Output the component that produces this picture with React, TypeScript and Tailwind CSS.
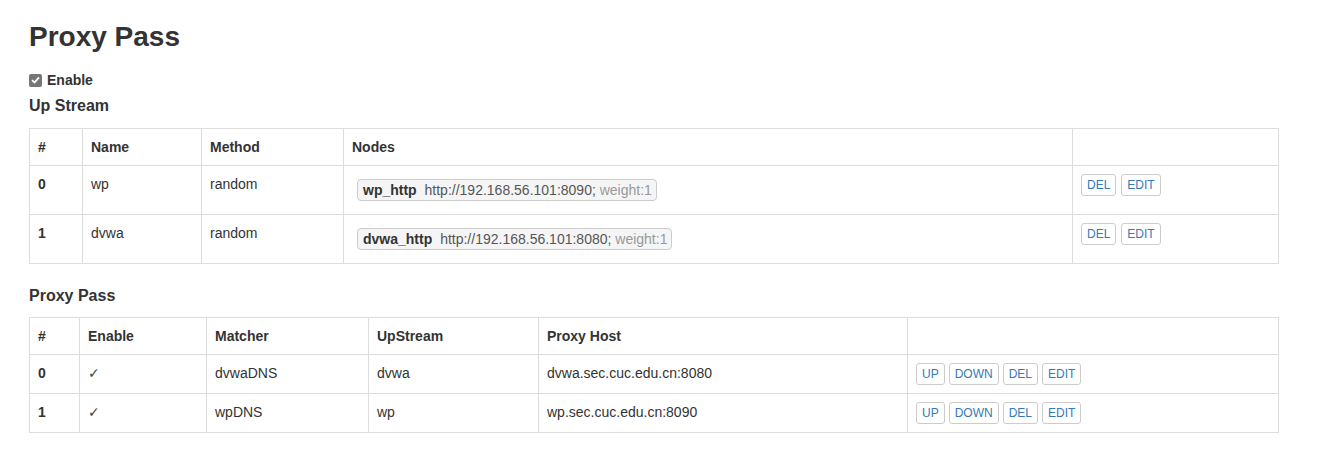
import React from "react";

type Upstream = { name: string; method: string; node: string; url: string };
type Rule = { matcher: string; upstream: string; host: string };

const upstreams: Upstream[] = [
  { name: "wp", method: "random", node: "wp_http", url: "http://192.168.56.101:8090;" },
  { name: "dvwa", method: "random", node: "dvwa_http", url: "http://192.168.56.101:8080;" },
];

const rules: Rule[] = [
  { matcher: "dvwaDNS", upstream: "dvwa", host: "dvwa.sec.cuc.edu.cn:8080" },
  { matcher: "wpDNS", upstream: "wp", host: "wp.sec.cuc.edu.cn:8090" },
];

const Btn = ({ label }: { label: string }) => (
  <button className="inline-block rounded-[3px] border border-[#ccc] bg-white px-[5px] py-[1px] text-[12px] leading-[18px] text-[#337ab7]">
    {label}
  </button>
);

const th = "border border-[#ddd] p-[8px] text-left align-top font-bold leading-[20px]";
const td = "border border-[#ddd] p-[8px] text-left align-top leading-[20px]";

const App = () => {
  return (
    <div
      className="min-h-[457px] bg-white px-[29px] text-[14px] text-[#333]"
      style={{ fontFamily: '"Liberation Sans", Arial, sans-serif' }}
    >
      <h1 className="pt-[21px] text-[28px] font-bold leading-[31px]">Proxy Pass</h1>

      <label className="mt-[18px] flex items-center text-[14px] font-bold leading-[20px]">
        <span className="mr-[5px] flex h-[13px] w-[13px] items-center justify-center rounded-[2px] bg-[#767676]">
          <svg width="9" height="8" viewBox="0 0 9 8">
            <path d="M1 4.2 L3.5 6.5 L8 1.3" fill="none" stroke="white" strokeWidth="1.8" />
          </svg>
        </span>
        Enable
      </label>

      <h3 className="mt-[6px] text-[16px] font-bold leading-[20px]">Up Stream</h3>

      <table className="mt-[12px] w-[1249px] table-fixed border-collapse">
        <colgroup>
          <col className="w-[53px]" />
          <col className="w-[119px]" />
          <col className="w-[142px]" />
          <col className="w-[729px]" />
          <col className="w-[206px]" />
        </colgroup>
        <thead>
          <tr>
            <th className={th}>#</th>
            <th className={th}>Name</th>
            <th className={th}>Method</th>
            <th className={th}>Nodes</th>
            <th className={th}></th>
          </tr>
        </thead>
        <tbody>
          {upstreams.map((u, i) => (
            <tr key={u.name}>
              <th className={th}>{i}</th>
              <td className={td}>{u.name}</td>
              <td className={td}>{u.method}</td>
              <td className={td}>
                <span className="m-[5px] inline-block rounded-[4px] border border-[#ccc] bg-[#f5f5f5] pl-[5px] pr-[4px] leading-[20px]">
                  <b className="mr-[4px] text-[#333]">{u.node}</b>{" "}
                  <span className="text-[#555]">{u.url}</span>{" "}
                  <span className="text-[#999]">weight:1</span>
                </span>
              </td>
              <td className={td}>
                <div className="flex gap-[5px]">
                  <Btn label="DEL" />
                  <Btn label="EDIT" />
                </div>
              </td>
            </tr>
          ))}
        </tbody>
      </table>

      <h3 className="mt-[22px] text-[16px] font-bold leading-[20px]">Proxy Pass</h3>

      <table className="mt-[11px] w-[1249px] table-fixed border-collapse">
        <colgroup>
          <col className="w-[50px]" />
          <col className="w-[127px]" />
          <col className="w-[162px]" />
          <col className="w-[170px]" />
          <col className="w-[369px]" />
          <col className="w-[371px]" />
        </colgroup>
        <thead>
          <tr>
            <th className={th}>#</th>
            <th className={th}>Enable</th>
            <th className={th}>Matcher</th>
            <th className={th}>UpStream</th>
            <th className={th}>Proxy Host</th>
            <th className={th}></th>
          </tr>
        </thead>
        <tbody>
          {rules.map((r, i) => (
            <tr key={r.matcher}>
              <th className={th}>{i}</th>
              <td className={td}>
                <span
                  className="text-[14px] text-[#444]"
                  style={{ fontFamily: '"DejaVu Sans", sans-serif' }}
                >
                  ✓
                </span>
              </td>
              <td className={td}>{r.matcher}</td>
              <td className={td}>{r.upstream}</td>
              <td className={td}>{r.host}</td>
              <td className={td}>
                <div className="flex gap-[4px]">
                  <Btn label="UP" />
                  <Btn label="DOWN" />
                  <Btn label="DEL" />
                  <Btn label="EDIT" />
                </div>
              </td>
            </tr>
          ))}
        </tbody>
      </table>
    </div>
  );
};

export default App;
